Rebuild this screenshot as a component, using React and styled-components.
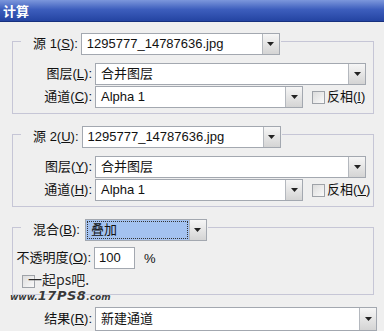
import React from "react";
import styled, { createGlobalStyle } from "styled-components";

const GlobalStyle = createGlobalStyle`
  html, body { margin: 0; padding: 0; background: #efefef; }
  body {
    font-family: "Liberation Sans", "Noto Sans CJK SC", sans-serif;
    font-size: 13px;
    color: #111;
  }
`;

const Dialog = styled.div`
  position: relative;
  width: 384px;
  height: 331px;
  overflow: hidden;
  background: #efefef;
`;

const TitleBar = styled.div`
  height: 21px;
  padding-left: 3px;
  background: linear-gradient(#7c97dc, #3d5ebd 45%, #2444a2);
  border-bottom: 1px solid #17307e;
  color: #fff;
  font-family: "Noto Sans CJK SC", sans-serif;
  font-weight: bold;
  font-size: 13px;
  line-height: 21px;
`;

const Body = styled.div`
  padding: 6px 10px 0 12px;
`;

const Group = styled.fieldset`
  margin: 0 0 ${(p) => p.$gap}px 0;
  padding: ${(p) => p.$top}px 7px ${(p) => p.$bottom}px 8px;
  border: 1px solid #c6c6d6;
  min-width: 0;
`;

const Legend = styled.legend`
  display: flex;
  align-items: center;
  gap: ${(p) => p.$gap}px;
  padding: 5px 1px 0 12px;
`;

const Label = styled.span`
  white-space: nowrap;
  line-height: 22px;
`;

const RowLabel = styled(Label)`
  flex: none;
  width: ${(p) => p.$w}px;
  display: flex;
  justify-content: flex-end;
`;

const Row = styled.div`
  display: flex;
  align-items: center;
  gap: 3px;
  height: ${(p) => p.$h || 22}px;
  margin-top: ${(p) => p.$mt || 0}px;
  margin-left: ${(p) => p.$ml || 0}px;
`;

const ComboBox = styled.div`
  display: flex;
  flex: ${(p) => (p.$w ? "none" : "1")};
  width: ${(p) => (p.$w ? `${p.$w}px` : "auto")};
  height: ${(p) => p.$h || 22}px;
  box-sizing: border-box;
  border: 1px solid #a3a8b0;
  background: #fff;
`;

const Field = styled.div`
  flex: 1;
  display: flex;
  align-items: center;
  padding: 0 2px;
  background: ${(p) => (p.$active ? "#a4c2f0" : "#fff")};
  overflow: hidden;
  white-space: nowrap;
`;

const FieldText = styled.span`
  padding: 0 3px;
  line-height: 16px;
  outline: ${(p) => (p.$active ? "1px dotted #333" : "none")};
  flex: ${(p) => (p.$active ? "1" : "none")};
`;

const DropButton = styled.div`
  flex: none;
  width: 16px;
  display: flex;
  align-items: center;
  justify-content: center;
  border-left: 1px solid #b4b8be;
  background: linear-gradient(#f6f6f6, #d4d4d4);
`;

const Arrow = () => (
  <svg width="7" height="4" viewBox="0 0 7 4">
    <polygon points="0,0 7,0 3.5,4" fill="#222" />
  </svg>
);

const Combo = ({ text, width, active, height }) => (
  <ComboBox $w={width} $h={height}>
    <Field $active={active}>
      <FieldText $active={active}>{text}</FieldText>
    </Field>
    <DropButton>
      <Arrow />
    </DropButton>
  </ComboBox>
);

const CheckBox = styled.span`
  flex: none;
  width: 11px;
  height: 11px;
  border: 1px solid #9ea2a8;
  background: linear-gradient(135deg, #dcdcdc, #fafafa);
  margin-left: ${(p) => p.$ml || 0}px;
`;

const CheckLabel = styled(Label)`
  margin-left: -1px;
`;

const TextInput = styled.div`
  flex: none;
  width: 41px;
  height: 22px;
  box-sizing: border-box;
  border: 1px solid #a3a8b0;
  background: #fff;
  padding-left: 4px;
  line-height: 20px;
`;

const Percent = styled.span`
  margin-left: 6px;
`;

const Watermark = styled.div`
  position: absolute;
  left: 10px;
  top: 272px;
  color: #333;
  text-shadow: 0 0 2px #fff;
  pointer-events: none;
`;

const WaterTop = styled.div`
  padding-left: 18px;
  font-family: "Noto Sans CJK SC", sans-serif;
  font-size: 14px;
  line-height: 15px;
  color: #2a2a2a;
`;

const WaterSite = styled.div`
  margin-top: 2px;
  font-family: "DejaVu Sans", sans-serif;
  font-weight: bold;
  font-style: italic;
  font-size: 9px;
  line-height: 13px;
  color: #3a3a3a;
  b {
    font-size: 13px;
    letter-spacing: 0.5px;
  }
`;

const SourceGroup = ({ n, m1, m2, m3, m4, gap }) => (
  <Group $top={8} $bottom={5} $gap={gap}>
    <Legend $gap={3}>
      <Label>
        源 {n}(<u>{m1}</u>):
      </Label>
      <Combo text="1295777_14787636.jpg" width={199} />
    </Legend>
    <Row>
      <RowLabel $w={71}>
        图层(<u>{m2}</u>):
      </RowLabel>
      <Combo text="合并图层" />
    </Row>
    <Row $mt={1}>
      <RowLabel $w={71}>
        通道(<u>{m3}</u>):
      </RowLabel>
      <Combo text="Alpha 1" width={208} />
      <CheckBox $ml={6} />
      <CheckLabel>
        反相(<u>{m4}</u>)
      </CheckLabel>
    </Row>
  </Group>
);

export default function App() {
  return (
    <>
      <GlobalStyle />
      <Dialog>
        <TitleBar>计算</TitleBar>
        <Body>
          <SourceGroup n={1} m1="S" m2="L" m3="C" m4="I" gap={7} />
          <SourceGroup n={2} m1="U" m2="Y" m3="H" m4="V" gap={7} />
          <Group $top={6} $bottom={7} $gap={0}>
            <Legend $gap={5}>
              <Label>
                混合(<u>B</u>):
              </Label>
              <Combo text="叠加" width={122} active />
            </Legend>
            <Row $ml={-4}>
              <RowLabel $w={74}>
                不透明度(<u>O</u>):
              </RowLabel>
              <TextInput>100</TextInput>
              <Percent>%</Percent>
            </Row>
            <Row $h={12} $mt={6}>
              <CheckBox $ml={1} />
            </Row>
          </Group>
          <Row $mt={12} $ml={9} $h={24}>
            <RowLabel $w={71}>
              结果(<u>R</u>):
            </RowLabel>
            <Combo text="新建通道" width={282} height={24} />
          </Row>
        </Body>
        <Watermark>
          <WaterTop>一起ps吧.</WaterTop>
          <WaterSite>
            www.<b>17PS8</b>.com
          </WaterSite>
        </Watermark>
      </Dialog>
    </>
  );
}
